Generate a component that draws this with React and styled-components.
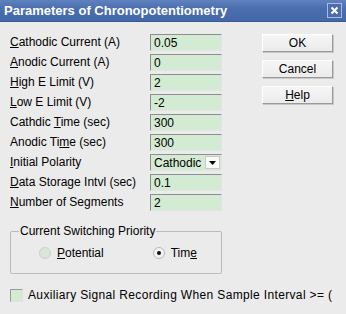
import React from "react"
import styled, { createGlobalStyle } from "styled-components"

const GlobalStyle = createGlobalStyle`
  html, body {
    margin: 0;
    padding: 0;
    background: #ebebeb;
  }
  body {
    font-family: "Liberation Sans", Arial, sans-serif;
    font-size: 12px;
    color: #000;
  }
`

const Dialog = styled.div`
  width: 346px;
  height: 314px;
  background: #ebebeb;
  overflow: hidden;
`

const TitleBar = styled.div`
  height: 22px;
  box-sizing: border-box;
  display: flex;
  align-items: center;
  justify-content: space-between;
  padding: 0 4px 0 4px;
  background: linear-gradient(to bottom, #5f81c0 0%, #4b6fae 40%, #4467a7 100%);
  border-bottom: 1px solid #3a5a94;
`

const Title = styled.span`
  color: #fff;
  font-weight: bold;
  font-size: 13px;
`

const CloseBox = styled.div`
  width: 13px;
  height: 13px;
  border: 1px solid #a9bde3;
  background: #4a6dad;
  display: flex;
  align-items: center;
  justify-content: center;
`

const Body = styled.div`
  padding: 12px 0 0 10px;
`

const Top = styled.div`
  display: flex;
  align-items: flex-start;
`

const Form = styled.div`
  display: grid;
  grid-template-columns: 140px 72px;
  grid-auto-rows: 17px;
  row-gap: 3px;
`

const Label = styled.div`
  line-height: 17px;
  white-space: nowrap;
`

const Field = styled.div`
  box-sizing: border-box;
  height: 17px;
  background: #d3ebd3;
  border-top: 1px solid #8e8e8e;
  border-left: 1px solid #8e8e8e;
  border-right: 1px solid #e4e4e4;
  border-bottom: 1px solid #e4e4e4;
  display: flex;
  align-items: center;
  justify-content: space-between;
  padding-left: 3px;
`

const DropArrow = styled.div`
  width: 15px;
  height: 13px;
  margin-right: 1px;
  background: #fafafa;
  border: 1px solid #c8c8c8;
  box-sizing: border-box;
  display: flex;
  align-items: center;
  justify-content: center;
`

const Buttons = styled.div`
  display: flex;
  flex-direction: column;
  gap: 8px;
  margin-left: 40px;
`

const Button = styled.div`
  box-sizing: border-box;
  width: 71px;
  height: 18px;
  display: flex;
  align-items: center;
  justify-content: center;
  background: linear-gradient(to bottom, #f6f6f6, #ebebeb);
  border-top: 1px solid #fff;
  border-left: 1px solid #fff;
  border-right: 1px solid #9a9a9a;
  border-bottom: 1px solid #9a9a9a;
  box-shadow: 1px 1px 0 #c8c8c8;
`

const Group = styled.fieldset`
  box-sizing: border-box;
  width: 212px;
  height: 49px;
  margin: 14px 0 0 0;
  padding: 0;
  border: 1px solid #b5bcc4;
  border-radius: 2px;
`

const Legend = styled.legend`
  padding: 0 1px;
  margin-left: 8px;
  line-height: 13px;
`

const Radios = styled.div`
  display: flex;
  align-items: center;
  height: 20px;
  margin-top: 5px;
`

const RadioItem = styled.div`
  display: flex;
  align-items: center;
  gap: 6px;
  margin-left: ${(p) => p.$left}px;
`

const RadioCircle = styled.div`
  box-sizing: border-box;
  width: 12px;
  height: 12px;
  border-radius: 50%;
  border: 1px solid ${(p) => (p.$checked ? "#b8b8b8" : "#c8d2c8")};
  background: ${(p) => (p.$checked ? "#f2f2f2" : "#dbe6db")};
  display: flex;
  align-items: center;
  justify-content: center;

  &::after {
    content: "";
    width: 4px;
    height: 4px;
    border-radius: 50%;
    background: ${(p) => (p.$checked ? "#111" : "transparent")};
  }
`

const CheckRow = styled.div`
  display: flex;
  align-items: center;
  gap: 5px;
  margin-top: 14px;
  width: 332px;
  white-space: nowrap;
`

const CheckText = styled.span`
  letter-spacing: 0.35px;
`

const CheckBox = styled.div`
  box-sizing: border-box;
  flex: none;
  width: 13px;
  height: 13px;
  background: #d3ebd3;
  border-top: 1px solid #9a9a9a;
  border-left: 1px solid #9a9a9a;
  border-right: 1px solid #e0e0e0;
  border-bottom: 1px solid #e0e0e0;
`

const rows = [
  [<><u>C</u>athodic Current (A)</>, "0.05"],
  [<><u>A</u>nodic Current (A)</>, "0"],
  [<><u>H</u>igh E Limit (V)</>, "2"],
  [<><u>L</u>ow E Limit (V)</>, "-2"],
  [<>Cathdic <u>T</u>ime (sec)</>, "300"],
  [<>Anodic Ti<u>m</u>e (sec)</>, "300"],
  [<><u>I</u>nitial Polarity</>, null],
  [<><u>D</u>ata Storage Intvl (sec)</>, "0.1"],
  [<><u>N</u>umber of Segments</>, "2"],
]

export default function App() {
  return (
    <Dialog>
      <GlobalStyle />
      <TitleBar>
        <Title>Parameters of Chronopotentiometry</Title>
        <CloseBox>
          <svg width="9" height="9" viewBox="0 0 9 9">
            <path d="M1.5 1.5 L7.5 7.5 M7.5 1.5 L1.5 7.5" stroke="#fff" strokeWidth="2" />
          </svg>
        </CloseBox>
      </TitleBar>
      <Body>
        <Top>
          <div>
            <Form>
              {rows.map(([label, value], i) => (
                <React.Fragment key={i}>
                  <Label>{label}</Label>
                  {value === null ? (
                    <Field>
                      Cathodic
                      <DropArrow>
                        <svg width="7" height="4" viewBox="0 0 7 4">
                          <path d="M0 0 H7 L3.5 4 Z" fill="#000" />
                        </svg>
                      </DropArrow>
                    </Field>
                  ) : (
                    <Field>{value}</Field>
                  )}
                </React.Fragment>
              ))}
            </Form>
            <Group>
              <Legend>Current Switching Priority</Legend>
              <Radios>
                <RadioItem $left={28}>
                  <RadioCircle />
                  <span><u>P</u>otential</span>
                </RadioItem>
                <RadioItem $left={49}>
                  <RadioCircle $checked />
                  <span>Tim<u>e</u></span>
                </RadioItem>
              </Radios>
            </Group>
          </div>
          <Buttons>
            <Button>OK</Button>
            <Button>Cancel</Button>
            <Button><span><u>H</u>elp</span></Button>
          </Buttons>
        </Top>
        <CheckRow>
          <CheckBox />
          <CheckText>Auxiliary Signal Recording When Sample Interval &gt;= (</CheckText>
        </CheckRow>
      </Body>
    </Dialog>
  )
}
